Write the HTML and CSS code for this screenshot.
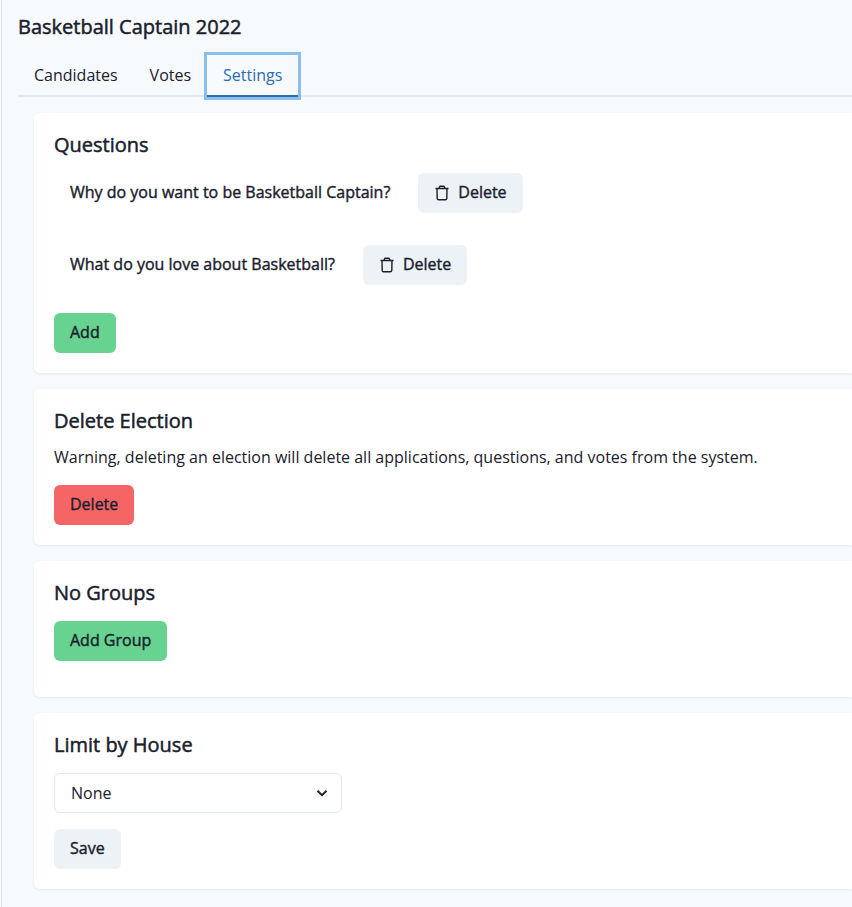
FILE: index.html
```html
<!DOCTYPE html>
<html lang="en">
<head>
<meta charset="utf-8">
<title>Basketball Captain 2022</title>
<link rel="stylesheet" href="styles.css">
</head>
<body>
<main class="page">
  <h1 class="title">Basketball Captain 2022</h1>
  <nav class="tabs">
    <button class="tab">Candidates</button>
    <button class="tab">Votes</button>
    <button class="tab active">Settings</button>
  </nav>
  <div class="panel">
    <section class="card questions">
      <h2>Questions</h2>
      <div class="question"><span>Why do you want to be Basketball Captain?</span>
        <button class="btn"><svg class="trash" viewBox="0 0 16 16"><path d="M1.500 3.500h13M5 3.500l.5-1.500q.2-.7.9-.7h3.200q.7 0 .9.700L11 3.500M3 3.500l.2 10q.1 1.200 1.300 1.200h7q1.200 0 1.300-1.200L13 3.500"/></svg>Delete</button></div>
      <div class="question"><span>What do you love about Basketball?</span>
        <button class="btn"><svg class="trash" viewBox="0 0 16 16"><path d="M1.500 3.500h13M5 3.500l.5-1.500q.2-.7.9-.7h3.200q.7 0 .9.700L11 3.500M3 3.500l.2 10q.1 1.200 1.300 1.200h7q1.200 0 1.300-1.200L13 3.500"/></svg>Delete</button></div>
      <button class="btn green">Add</button>
    </section>
    <section class="card removal">
      <h2>Delete Election</h2>
      <p>Warning, deleting an election will delete all applications, questions, and votes from the system.</p>
      <button class="btn red">Delete</button>
    </section>
    <section class="card groups">
      <h2>No Groups</h2>
      <button class="btn green">Add Group</button>
    </section>
    <section class="card house">
      <h2>Limit by House</h2>
      <div class="select"><span>None</span><svg class="chevron" viewBox="0 0 12 8"><path d="M1.500 1.800 6 6.200l4.500-4.400"/></svg></div>
      <button class="btn">Save</button>
    </section>
  </div>
</main>
</body>
</html>
```
FILE: styles.css
```css
* { box-sizing: border-box; }
body { margin: 0; background: #f7fafc; color: #1a202c; font: 16px/24px "Open Sans", sans-serif; overflow: hidden; }
button { font: inherit; color: inherit; border: 0; background: none; margin: 0; }
.page { height: 907px; margin-left: 1px; border-left: 1px solid #e2e8f0; padding: 12px 0 0 16px; }
h1, h2 { margin: 0; font-size: 20px; line-height: 30px; font-weight: 400; -webkit-text-stroke: .5px currentColor; }
.title { height: 43px; }
.tabs { display: flex; height: 42px; border-bottom: 2px solid #e2e8f0; }
.tab { height: 42px; padding: 0 16px; border-bottom: 2px solid transparent; }
.active { color: #2b6cb0; border-color: #2b6cb0; box-shadow: 0 0 0 3px rgba(66, 153, 225, .6); }
.panel { padding: 16px 0 0 16px; display: flex; flex-direction: column; gap: 16px; }
.card { background: #fff; padding: 17px 20px 20px; border-radius: 6px 0 0 6px; box-shadow: 0 1px 3px rgba(0, 0, 0, .07); }
.questions { height: 260px; }
.removal { height: 156px; }
.groups { height: 136px; }
.house { height: 176px; }
.question { height: 72px; display: flex; align-items: flex-start; padding: 13px 0 0 16px; gap: 28px; }
.question span { line-height: 38px; -webkit-text-stroke: .4px currentColor; }
.btn { display: inline-flex; align-items: center; height: 40px; padding: 0 16px 2px; background: #edf2f7; border-radius: 6px; -webkit-text-stroke: .4px currentColor; }
.green { background: #68d391; }
.questions > .green { margin-top: 9px; }
.red { background: #f56565; }
.trash, .chevron { fill: none; stroke: currentColor; stroke-width: 1.4; }
.trash { width: 16px; height: 16px; margin: 2px 8px 0 0; }
.chevron { width: 12px; height: 8px; stroke-width: 1.900; }
p { margin: 9px 0 16px; }
.select { width: 288px; height: 40px; border: 1px solid #e2e8f0; border-radius: 6px; margin: 13px 0 16px; padding: 0 13px 0 16px; display: flex; align-items: center; justify-content: space-between; }
.groups .btn { margin-top: 13px; }
```
